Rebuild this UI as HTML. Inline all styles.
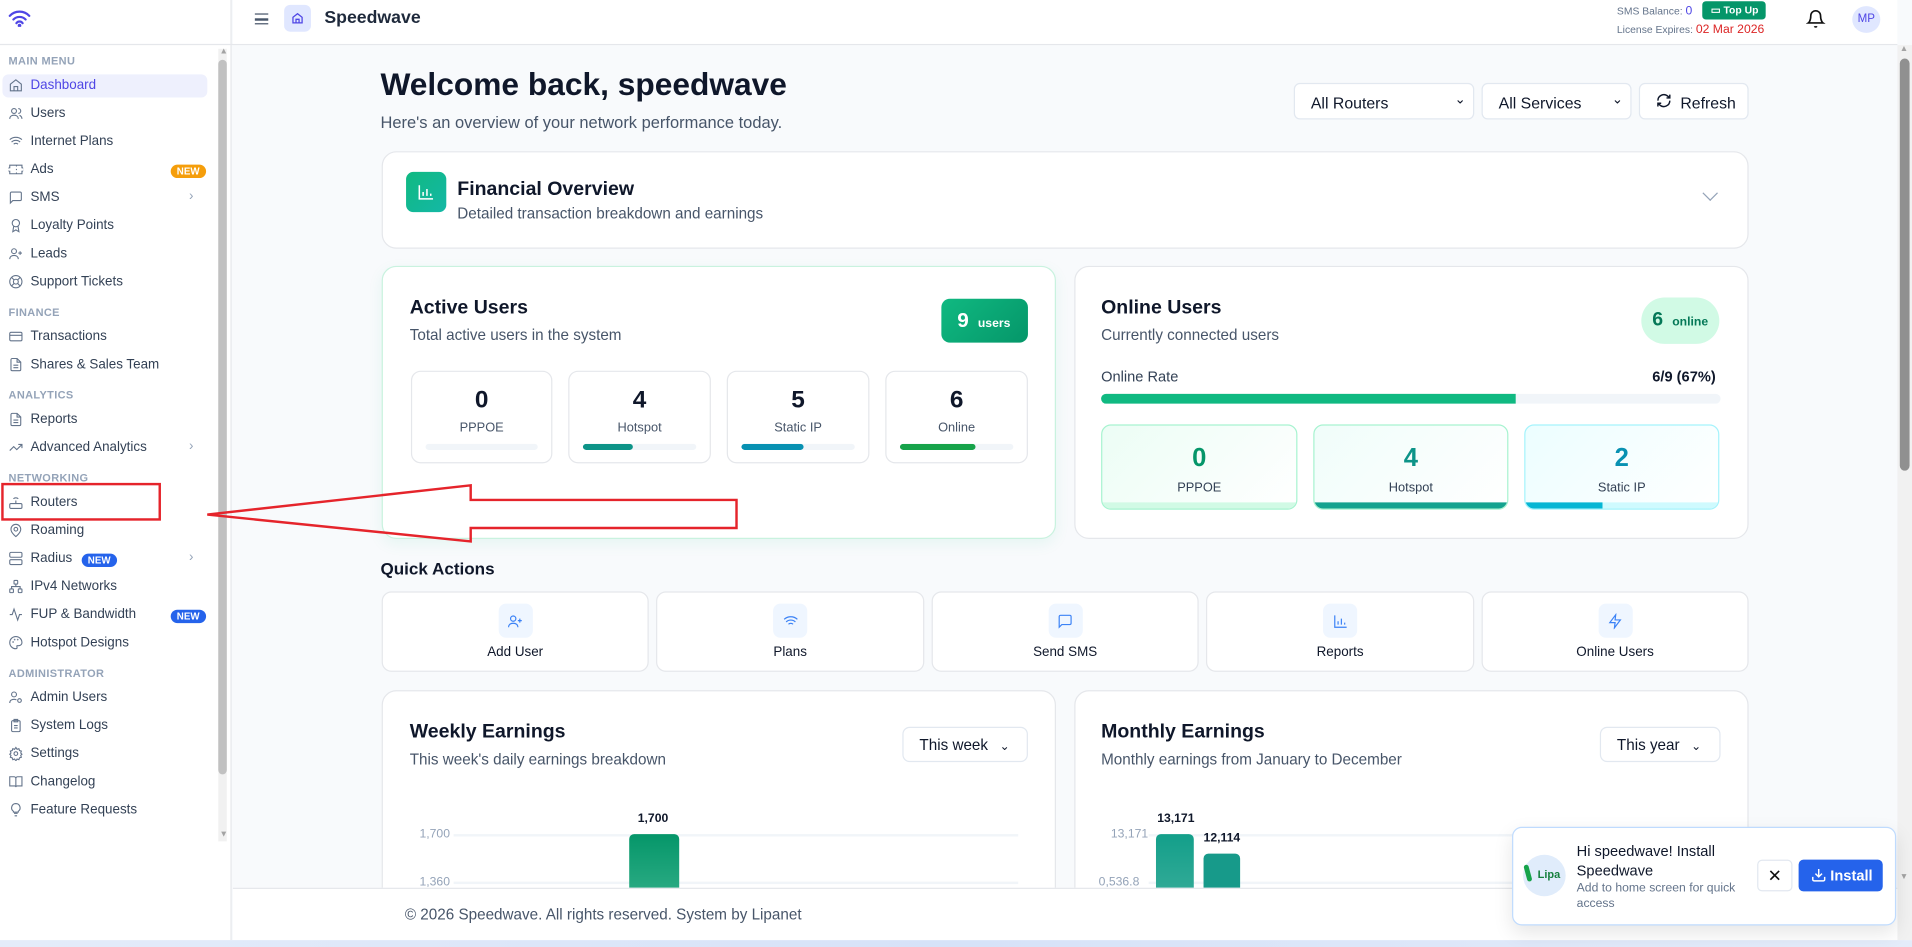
<!DOCTYPE html>
<html><head><meta charset="utf-8"><style>
*{box-sizing:border-box;margin:0;padding:0}
html,body{width:1912px;height:947px;overflow:hidden;background:#f8fafc;font-family:"Liberation Sans",Arial,sans-serif;color:#0f172a}
#w{position:absolute;left:0;top:0;width:1568px;height:777px;transform:scale(1.21939);transform-origin:0 0;background:#f8fafc}
.a{position:absolute}
.sb{left:0;top:0;width:190px;height:771px;background:#fff;border-right:1px solid #e5e7eb}
.lbl{position:absolute;left:7px;font-size:9px;font-weight:bold;color:#94a3b8;letter-spacing:.3px}
.it{position:absolute;left:7px;font-size:11px;color:#334155;display:flex;align-items:center;height:18px}
.it svg{width:12px;height:12px;margin-right:6px;stroke:#64748b;fill:none;stroke-width:1.8}
.new{position:absolute;font-size:8px;font-weight:bold;color:#fff;border-radius:8px;padding:1px 5px}
.chev{position:absolute;left:155px;font-size:11px;color:#94a3b8}
.card{position:absolute;background:#fff;border:1px solid #e5e7eb;border-radius:12px}
.t16{font-size:16px;font-weight:bold;color:#0f172a}
.s13{font-size:12.5px;color:#475569}
.sub{position:absolute;background:#fff;border:1px solid #e5e7eb;border-radius:8px;text-align:center}
.sub b{display:block;font-size:20px;margin-top:12px}
.sub span{display:block;font-size:10.5px;color:#475569;margin-top:5px}
.bar{position:absolute;left:11px;right:11px;top:59px;height:5px;background:#f1f5f9;border-radius:3px;overflow:hidden}
.bar i{display:block;height:5px;border-radius:3px}
.ob{position:absolute;border:1px solid #a7f3d0;border-radius:8px;text-align:center;overflow:hidden}
.ob b{display:block;font-size:21px;margin-top:15px}
.ob span{display:block;font-size:10.5px;color:#334155;margin-top:6px}
.ob i{position:absolute;left:0;right:0;bottom:0;height:5px}
.qa{position:absolute;top:485px;height:66px;background:#fff;border:1px solid #e5e7eb;border-radius:8px;text-align:center}
.qa .ic{width:28px;height:28px;margin:9px auto 0;background:#eff6ff;border-radius:6px;display:flex;align-items:center;justify-content:center}
.qa svg{width:13px;height:13px;stroke:#3b82f6;fill:none;stroke-width:1.8}
.qa span{display:block;font-size:11px;color:#0f172a;margin-top:6px}
.sel{position:absolute;top:68px;height:30px;background:#fff;border:1px solid #e2e8f0;border-radius:5px;font-size:13px;padding:8px 13px;color:#0f172a}
</style></head><body><div id="w">
<!-- sidebar -->
<div class="a sb"></div>
<svg class="a" style="left:7px;top:8px" width="18" height="14" viewBox="0 0 18 14" fill="none" stroke="#4f46e5" stroke-width="1.8" stroke-linecap="round"><path d="M1 5a11 11 0 0 1 16 0M4 8a7 7 0 0 1 10 0M6.5 11a3 3 0 0 1 5 0"/><circle cx="9" cy="13" r=".6" fill="#4f46e5"/></svg>
<div class="a" style="left:0;top:36px;width:1556px;height:1px;background:#e5e7eb"></div>
<div class="a" style="left:179px;top:40px;width:7px;height:650px;background:#f1f1f1"></div>
<div class="a" style="left:179px;top:49px;width:7px;height:586px;background:#c1c1c1;border-radius:4px"></div>
<div class="a" style="left:180px;top:39px;font-size:7px;color:#a3a3a3">▲</div>
<div class="a" style="left:180px;top:681px;font-size:7px;color:#a3a3a3">▼</div>
<div class="a" style="left:2px;top:61px;width:168px;height:19px;background:#eef0fd;border-radius:5px"></div>
<div class="lbl" style="top:45px">MAIN MENU</div>
<div class="it" style="top:61px;color:#4f46e5"><svg viewBox="0 0 24 24"><path d="M3 10l9-7 9 7v11H3z M9 21v-7h6v7"/></svg>Dashboard</div>
<div class="it" style="top:84px"><svg viewBox="0 0 24 24"><circle cx="9" cy="8" r="4"/><path d="M2 21c0-4 3-6 7-6s7 2 7 6M16 4a4 4 0 0 1 0 8M22 21c0-3-2-5-4-6"/></svg>Users</div>
<div class="it" style="top:107px"><svg viewBox="0 0 24 24"><path d="M2 9a15 15 0 0 1 20 0M5 13a10 10 0 0 1 14 0M8.5 16.5a5 5 0 0 1 7 0M12 20h.01"/></svg>Internet Plans</div>
<div class="it" style="top:130px"><svg viewBox="0 0 24 24"><path d="M2 9a3 3 0 0 0 0 6v4h20v-4a3 3 0 0 0 0-6V5H2z M13 5v2M13 17v2M13 11v2"/></svg>Ads</div>
<div class="new" style="left:140px;top:135px;background:#f59e0b">NEW</div>
<div class="it" style="top:153px"><svg viewBox="0 0 24 24"><path d="M21 15a2 2 0 0 1-2 2H7l-4 4V5a2 2 0 0 1 2-2h14a2 2 0 0 1 2 2z"/></svg>SMS</div>
<div class="chev" style="top:155px">›</div>
<div class="it" style="top:176px"><svg viewBox="0 0 24 24"><circle cx="12" cy="8" r="6"/><path d="M8.5 13L7 22l5-3 5 3-1.5-9"/></svg>Loyalty Points</div>
<div class="it" style="top:199px"><svg viewBox="0 0 24 24"><circle cx="9" cy="8" r="4"/><path d="M2 21c0-4 3-6 7-6s7 2 7 6M19 8v6M16 11h6"/></svg>Leads</div>
<div class="it" style="top:222px"><svg viewBox="0 0 24 24"><circle cx="12" cy="12" r="10"/><circle cx="12" cy="12" r="4"/><path d="M5 5l4 4M15 15l4 4M19 5l-4 4M9 15l-4 4"/></svg>Support Tickets</div>
<div class="lbl" style="top:251px">FINANCE</div>
<div class="it" style="top:267px"><svg viewBox="0 0 24 24"><rect x="2" y="5" width="20" height="14" rx="2"/><path d="M2 10h20"/></svg>Transactions</div>
<div class="it" style="top:290px"><svg viewBox="0 0 24 24"><path d="M14 2H6a2 2 0 0 0-2 2v16a2 2 0 0 0 2 2h12a2 2 0 0 0 2-2V8z M14 2v6h6M8 13h8M8 17h8"/></svg>Shares &amp; Sales Team</div>
<div class="lbl" style="top:319px">ANALYTICS</div>
<div class="it" style="top:335px"><svg viewBox="0 0 24 24"><path d="M14 2H6a2 2 0 0 0-2 2v16a2 2 0 0 0 2 2h12a2 2 0 0 0 2-2V8z M14 2v6h6M8 13h8M8 17h8"/></svg>Reports</div>
<div class="it" style="top:358px"><svg viewBox="0 0 24 24"><path d="M22 7l-8.5 8.5-5-5L2 17M16 7h6v6"/></svg>Advanced Analytics</div>
<div class="chev" style="top:360px">›</div>
<div class="lbl" style="top:387px">NETWORKING</div>
<div class="it" style="top:403px"><svg viewBox="0 0 24 24"><rect x="2" y="14" width="20" height="8" rx="2"/><path d="M12 14V9M8 6a6 6 0 0 1 8 0M6 18h.01M10 18h.01"/></svg>Routers</div>
<div class="a" style="left:1px;top:396px;width:131px;height:31px;border:2px solid #e5242b"></div>
<div class="it" style="top:426px"><svg viewBox="0 0 24 24"><path d="M20 10c0 6-8 12-8 12S4 16 4 10a8 8 0 0 1 16 0z"/><circle cx="12" cy="10" r="3"/></svg>Roaming</div>
<div class="it" style="top:449px"><svg viewBox="0 0 24 24"><rect x="2" y="2" width="20" height="8" rx="2"/><rect x="2" y="14" width="20" height="8" rx="2"/></svg>Radius</div>
<div class="new" style="left:67px;top:454px;background:#2563eb">NEW</div>
<div class="chev" style="top:451px">›</div>
<div class="it" style="top:472px"><svg viewBox="0 0 24 24"><rect x="9" y="2" width="6" height="6" rx="1"/><rect x="2" y="16" width="6" height="6" rx="1"/><rect x="16" y="16" width="6" height="6" rx="1"/><path d="M5 16v-4h14v4M12 8v4"/></svg>IPv4 Networks</div>
<div class="it" style="top:495px"><svg viewBox="0 0 24 24"><path d="M22 12h-4l-3 9L9 3l-3 9H2"/></svg>FUP &amp; Bandwidth</div>
<div class="new" style="left:140px;top:500px;background:#2563eb">NEW</div>
<div class="it" style="top:518px"><svg viewBox="0 0 24 24"><path d="M12 2a10 10 0 0 0 0 20c1.5 0 2-1 2-2s-1-2 0-3h3a5 5 0 0 0 5-5c0-5.5-4.5-10-10-10z"/><circle cx="7.5" cy="11" r=".5"/><circle cx="10" cy="7" r=".5"/><circle cx="15" cy="7" r=".5"/></svg>Hotspot Designs</div>
<div class="lbl" style="top:547px">ADMINISTRATOR</div>
<div class="it" style="top:563px"><svg viewBox="0 0 24 24"><circle cx="9" cy="7" r="4"/><path d="M2 21c0-4 3-6 7-6 2 0 3 .5 4 1"/><circle cx="18" cy="17" r="3"/></svg>Admin Users</div>
<div class="it" style="top:586px"><svg viewBox="0 0 24 24"><rect x="5" y="4" width="14" height="18" rx="2"/><path d="M9 2h6v4H9zM9 12h6M9 16h6"/></svg>System Logs</div>
<div class="it" style="top:609px"><svg viewBox="0 0 24 24"><circle cx="12" cy="12" r="3"/><path d="M12 2l2 3 3-1 1 3 3 1-1 3 2 2-2 2 1 3-3 1-1 3-3-1-2 3-2-3-3 1-1-3-3-1 1-3-2-2 2-2-1-3 3-1 1-3 3 1z"/></svg>Settings</div>
<div class="it" style="top:632px"><svg viewBox="0 0 24 24"><path d="M2 4h7a3 3 0 0 1 3 3v14a2 2 0 0 0-2-2H2zM22 4h-7a3 3 0 0 0-3 3v14a2 2 0 0 1 2-2h8z"/></svg>Changelog</div>
<div class="it" style="top:655px"><svg viewBox="0 0 24 24"><path d="M9 18h6M10 22h4M12 2a7 7 0 0 0-4 12.7V16h8v-1.3A7 7 0 0 0 12 2z"/></svg>Feature Requests</div>

<!-- header -->
<div class="a" style="left:191px;top:0;width:1365px;height:36px;background:#fff"></div>
<div class="a" style="left:209px;top:11px;width:11px;height:9px;border-top:1.6px solid #475569;border-bottom:1.6px solid #475569"></div>
<div class="a" style="left:209px;top:15px;width:11px;height:1.6px;background:#475569"></div>
<div class="a" style="left:233px;top:4px;width:22px;height:22px;background:#e0e7ff;border-radius:5px"></div>
<svg class="a" style="left:239px;top:10px" width="10" height="10" viewBox="0 0 24 24" fill="none" stroke="#4f46e5" stroke-width="2.5"><path d="M3 10l9-7 9 7v11H3z M9 21v-7h6v7"/></svg>
<div class="a" style="left:266px;top:7px;font-size:14.5px;font-weight:bold;color:#1e293b">Speedwave</div>
<div class="a" style="left:1326px;top:4px;font-size:8.5px;color:#64748b">SMS Balance: <span style="color:#4f46e5;font-size:10px">0</span></div>
<div class="a" style="left:1396px;top:1px;width:52px;height:15px;background:#059669;border-radius:3px;color:#fff;font-size:8.5px;font-weight:bold;padding:2px 0 0 7px">▭ Top Up</div>
<div class="a" style="left:1326px;top:19px;font-size:8.5px;color:#64748b">License Expires: <span style="color:#dc2626;font-size:10px">02 Mar 2026</span></div>
<svg class="a" style="left:1481px;top:7px" width="16" height="17" viewBox="0 0 24 24" fill="none" stroke="#111" stroke-width="2"><path d="M6 8a6 6 0 0 1 12 0c0 7 3 9 3 9H3s3-2 3-9M10.5 21a1.7 1.7 0 0 0 3 0"/></svg>
<div class="a" style="left:1519px;top:5px;width:23px;height:22px;border-radius:50%;background:#e0e7ff;color:#4f46e5;font-size:9.5px;text-align:center;line-height:22px">MP</div>
<!-- page scrollbar -->
<div class="a" style="left:1556px;top:37px;width:12px;height:734px;background:#f1f1f1"></div>
<div class="a" style="left:1558px;top:48px;width:8px;height:338px;background:#909090;border-radius:4px"></div>
<div class="a" style="left:1558px;top:37px;font-size:7px;color:#a3a3a3">▲</div>
<div class="a" style="left:1558px;top:716px;font-size:7px;color:#a3a3a3">▼</div>

<!-- title -->
<div class="a" style="left:312px;top:54px;font-size:26px;font-weight:bold;color:#0f172a">Welcome back, speedwave</div>
<div class="a" style="left:312px;top:93px;font-size:13.5px;color:#475569">Here's an overview of your network performance today.</div>
<div class="sel" style="left:1061px;width:148px">All Routers<span style="position:absolute;right:6px;top:6px;font-size:11px">⌄</span></div>
<div class="sel" style="left:1215px;width:123px">All Services<span style="position:absolute;right:6px;top:6px;font-size:11px">⌄</span></div>
<div class="sel" style="left:1344px;width:90px;padding-left:33px">Refresh</div>
<svg class="a" style="left:1358px;top:76px" width="13" height="13" viewBox="0 0 24 24" fill="none" stroke="#0f172a" stroke-width="2.2"><path d="M21 12a9 9 0 0 1-15 6.7L3 16M3 12a9 9 0 0 1 15-6.7L21 8M21 3v5h-5M3 21v-5h5"/></svg>

<!-- financial -->
<div class="card" style="left:313px;top:124px;width:1121px;height:80px"></div>
<div class="a" style="left:333px;top:141px;width:33px;height:33px;border-radius:6px;background:linear-gradient(135deg,#10b981,#14b8a6)"></div>
<svg class="a" style="left:342px;top:150px" width="15" height="15" viewBox="0 0 24 24" fill="none" stroke="#fff" stroke-width="2"><path d="M3 3v18h18M8 17v-5M13 17V8M18 17v-3"/></svg>
<div class="a t16" style="left:375px;top:147px">Financial Overview</div>
<div class="a s13" style="left:375px;top:168px">Detailed transaction breakdown and earnings</div>
<div class="a" style="left:1398px;top:154px;width:9px;height:9px;border-right:1.3px solid #94a3b8;border-bottom:1.3px solid #94a3b8;transform:rotate(45deg)"></div>

<!-- active users -->
<div class="card" style="left:313px;top:218px;width:553px;height:224px;border-color:#c9f2df;box-shadow:0 4px 12px rgba(16,185,129,.08)"></div>
<div class="a t16" style="left:336px;top:244px">Active Users</div>
<div class="a s13" style="left:336px;top:268px">Total active users in the system</div>
<div class="a" style="left:772px;top:245px;width:71px;height:36px;border-radius:7px;background:linear-gradient(135deg,#10b981,#059669);color:#fff;padding:8px 0 0 13px"><span style="font-size:17px;font-weight:bold">9</span> <span style="font-size:10px;font-weight:bold;margin-left:3px">users</span></div>
<div class="sub" style="left:337px;top:304px;width:116px;height:76px"><b>0</b><span>PPPOE</span><div class="bar"><i style="width:0"></i></div></div>
<div class="sub" style="left:466px;top:304px;width:117px;height:76px"><b>4</b><span>Hotspot</span><div class="bar"><i style="width:44%;background:#0d9488"></i></div></div>
<div class="sub" style="left:596px;top:304px;width:117px;height:76px"><b>5</b><span>Static IP</span><div class="bar"><i style="width:55%;background:#0891b2"></i></div></div>
<div class="sub" style="left:726px;top:304px;width:117px;height:76px"><b>6</b><span>Online</span><div class="bar"><i style="width:67%;background:#16a34a"></i></div></div>

<!-- online users -->
<div class="card" style="left:881px;top:218px;width:553px;height:224px"></div>
<div class="a t16" style="left:903px;top:244px">Online Users</div>
<div class="a s13" style="left:903px;top:268px">Currently connected users</div>
<div class="a" style="left:1346px;top:244px;width:64px;height:38px;border-radius:19px;background:#d1fae5;padding:10px 0 0 9px;color:#047857"><span style="font-size:16px;font-weight:bold">6</span> <span style="font-size:10px;font-weight:bold;margin-left:3px">online</span></div>
<div class="a" style="left:903px;top:302px;font-size:12px;color:#334155">Online Rate</div>
<div class="a" style="left:1355px;top:302px;font-size:12px;font-weight:bold;color:#0f172a">6/9 (67%)</div>
<div class="a" style="left:903px;top:323px;width:508px;height:8px;background:#f1f5f9;border-radius:4px"><div style="width:67%;height:8px;background:#10b981;border-radius:4px 0 0 4px"></div></div>
<div class="ob" style="left:903px;top:348px;width:161px;height:70px;background:linear-gradient(135deg,#ecfdf5,#fff)"><b style="color:#059669">0</b><span>PPPOE</span><i style="background:#d1fae5"></i></div>
<div class="ob" style="left:1077px;top:348px;width:160px;height:70px;background:linear-gradient(135deg,#f0fdfa,#fff)"><b style="color:#0d9488">4</b><span>Hotspot</span><i style="background:#14a38f"></i></div>
<div class="ob" style="left:1250px;top:348px;width:160px;height:70px;border-color:#a5f3fc;background:linear-gradient(135deg,#ecfeff,#fff)"><b style="color:#0891b2">2</b><span>Static IP</span><i style="background:linear-gradient(90deg,#06b6d4 40%,#cffafe 40%)"></i></div>

<!-- arrow -->
<svg class="a" style="left:0;top:0" width="700" height="460"><polygon points="170,422 386,398 386,410 604,410 604,433 386,433 386,444" fill="none" stroke="#e5242b" stroke-width="2"/></svg>

<!-- quick actions -->
<div class="a" style="left:312px;top:458px;font-size:14px;font-weight:bold">Quick Actions</div>
<div class="qa" style="left:313px;width:219px"><div class="ic"><svg viewBox="0 0 24 24"><circle cx="9" cy="8" r="4"/><path d="M2 21c0-4 3-6 7-6s7 2 7 6M19 8v6M16 11h6"/></svg></div><span>Add User</span></div>
<div class="qa" style="left:538px;width:220px"><div class="ic"><svg viewBox="0 0 24 24"><path d="M2 9a15 15 0 0 1 20 0M5 13a10 10 0 0 1 14 0M8.5 16.5a5 5 0 0 1 7 0M12 20h.01"/></svg></div><span>Plans</span></div>
<div class="qa" style="left:764px;width:219px"><div class="ic"><svg viewBox="0 0 24 24"><path d="M21 15a2 2 0 0 1-2 2H7l-4 4V5a2 2 0 0 1 2-2h14a2 2 0 0 1 2 2z"/></svg></div><span>Send SMS</span></div>
<div class="qa" style="left:989px;width:220px"><div class="ic"><svg viewBox="0 0 24 24"><path d="M3 3v18h18M8 17v-5M13 17V8M18 17v-3"/></svg></div><span>Reports</span></div>
<div class="qa" style="left:1215px;width:219px"><div class="ic"><svg viewBox="0 0 24 24"><path d="M13 2L4 14h8l-1 8 9-12h-8z"/></svg></div><span>Online Users</span></div>

<!-- weekly -->
<div class="card" style="left:313px;top:566px;width:553px;height:200px"></div>
<div class="a t16" style="left:336px;top:592px">Weekly Earnings</div>
<div class="a s13" style="left:336px;top:616px">This week's daily earnings breakdown</div>
<div class="a" style="left:740px;top:596px;width:103px;height:29px;border:1px solid #e2e8f0;border-radius:6px;font-size:12.5px;padding:7px 0 0 13px;background:#fff">This week <span style="font-size:10px;margin-left:6px">⌄</span></div>
<div class="a" style="left:372px;top:684px;width:463px;height:1.5px;background:#f1f5f9"></div>
<div class="a" style="left:372px;top:723px;width:463px;height:1.5px;background:#f1f5f9"></div>
<div class="a" style="left:344px;top:679px;font-size:10px;color:#94a3b8">1,700</div>
<div class="a" style="left:344px;top:718px;font-size:10px;color:#94a3b8">1,360</div>
<div class="a" style="left:523px;top:666px;font-size:10px;font-weight:bold">1,700</div>
<div class="a" style="left:516px;top:684px;width:41px;height:60px;border-radius:4px 4px 0 0;background:linear-gradient(#059669,#34b08a)"></div>

<!-- monthly -->
<div class="card" style="left:881px;top:566px;width:553px;height:200px"></div>
<div class="a t16" style="left:903px;top:592px">Monthly Earnings</div>
<div class="a s13" style="left:903px;top:616px">Monthly earnings from January to December</div>
<div class="a" style="left:1312px;top:596px;width:99px;height:29px;border:1px solid #e2e8f0;border-radius:6px;font-size:12.5px;padding:7px 0 0 13px;background:#fff">This year <span style="font-size:10px;margin-left:6px">⌄</span></div>
<div class="a" style="left:942px;top:684px;width:470px;height:1.5px;background:#f1f5f9"></div>
<div class="a" style="left:942px;top:723px;width:470px;height:1.5px;background:#f1f5f9"></div>
<div class="a" style="left:911px;top:679px;font-size:10px;color:#94a3b8">13,171</div>
<div class="a" style="left:901px;top:718px;font-size:10px;color:#94a3b8">0,536.8</div>
<div class="a" style="left:949px;top:666px;font-size:10px;font-weight:bold">13,171</div>
<div class="a" style="left:987px;top:682px;font-size:10px;font-weight:bold">12,114</div>
<div class="a" style="left:948px;top:684px;width:31px;height:60px;border-radius:4px 4px 0 0;background:linear-gradient(#139f8a,#3aad9a)"></div>
<div class="a" style="left:987px;top:700px;width:30px;height:44px;border-radius:4px 4px 0 0;background:#179a8a"></div>

<!-- footer -->
<div class="a" style="left:191px;top:728px;width:1365px;height:43px;background:#fff;border-top:1px solid #e5e7eb"></div>
<div class="a" style="left:332px;top:743px;font-size:12.5px;color:#475569">© 2026 Speedwave. All rights reserved. System by Lipanet</div>
<div class="a" style="left:0;top:771px;width:1568px;height:6px;background:linear-gradient(90deg,#e4ecfa,#d6e2f8 50%,#e4ecfa)"></div>

<!-- install popup -->
<div class="a" style="left:1240px;top:678px;width:315px;height:81px;background:#fff;border:1px solid #bfdbfe;border-radius:8px;box-shadow:0 6px 16px rgba(0,0,0,.1)"></div>
<div class="a" style="left:1249px;top:701px;width:35px;height:34px;border-radius:50%;background:#e0ecfb;overflow:hidden;font-size:9px;font-weight:bold;color:#15803d;padding:11px 0 0 12px">Lipa</div>
<div class="a" style="left:1251px;top:709px;width:4px;height:14px;background:#16a34a;border-radius:2px;transform:rotate(-15deg)"></div>
<div class="a" style="left:1293px;top:690px;font-size:12px;color:#0f172a;line-height:16px">Hi speedwave! Install<br>Speedwave</div>
<div class="a" style="left:1293px;top:722px;font-size:10px;color:#64748b;line-height:13px">Add to home screen for quick<br>access</div>
<div class="a" style="left:1441px;top:705px;width:29px;height:26px;border:1px solid #e2e8f0;border-radius:4px;text-align:center;font-size:14px;line-height:24px;color:#111">✕</div>
<div class="a" style="left:1475px;top:705px;width:69px;height:26px;background:#2563eb;border-radius:4px;color:#fff;font-size:12px;font-weight:bold;padding:6px 0 0 26px">Install</div>
<svg class="a" style="left:1485px;top:711px" width="13" height="13" viewBox="0 0 24 24" fill="none" stroke="#fff" stroke-width="2.2"><path d="M21 15v4a2 2 0 0 1-2 2H5a2 2 0 0 1-2-2v-4M7 10l5 5 5-5M12 15V3"/></svg>
</div></body></html>
